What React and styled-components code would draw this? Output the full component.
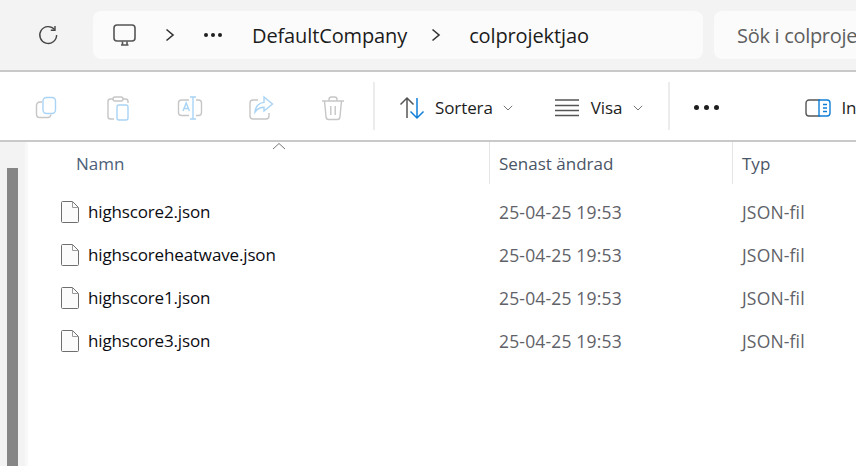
import React from 'react';
import styled, { createGlobalStyle } from 'styled-components';

const Global = createGlobalStyle`
html, body { margin: 0; padding: 0; background: #fff; }
body { width: 856px; height: 466px; overflow: hidden; font-family: 'Open Sans', 'Noto Sans', sans-serif; }
`;

const Window = styled.div`
width: 856px;
height: 466px;
display: flex;
flex-direction: column;
overflow: hidden;
`;

const AddressBar = styled.div`
height: 70px;
flex: none;
display: flex;
align-items: center;
background: #f3f3f3;
border-bottom: 2px solid #c9c9c9;
padding-left: 37px;
`;

const Refresh = styled.div`
width: 22px;
height: 22px;
margin-right: 34px;
flex: none;
`;

const Crumbs = styled.div`
width: 610px;
height: 48px;
flex: none;
display: flex;
align-items: center;
background: #fbfbfb;
border-radius: 8px;
padding-left: 20px;
box-sizing: border-box;
`;

const Crumb = styled.span`
font-size: 20px;
letter-spacing: -0.12px;
color: #1c1c1c;
margin-left: ${p => p.$left}px;
`;

const Chevron = styled.svg`
width: 10px;
height: 14px;
margin-left: ${p => p.$left}px;
flex: none;
`;

const Dots = styled.span`
display: flex;
gap: ${p => p.$gap}px;
margin-left: ${p => p.$left}px;
`;

const Dot = styled.i`
width: ${p => p.$size}px;
height: ${p => p.$size}px;
border-radius: 50%;
background: #1f1f1f;
`;

const Search = styled.div`
width: 200px;
height: 48px;
flex: none;
margin-left: 11px;
padding-left: 23px;
box-sizing: border-box;
display: flex;
align-items: center;
background: #fbfbfb;
border-radius: 8px;
font-size: 20px;
letter-spacing: -0.3px;
color: #5f5f5f;
white-space: nowrap;
overflow: hidden;
`;

const Toolbar = styled.div`
height: 65px;
padding: 3px 0 0 33px;
flex: none;
display: flex;
align-items: center;
background: #fff;
border-bottom: 2px solid #c9c9c9;
white-space: nowrap;
`;

const ToolIcon = styled.svg`
width: 26px;
height: 26px;
flex: none;
margin-right: ${p => p.$gap || 0}px;
margin-left: ${p => p.$left || 0}px;
`;

const Divider = styled.div`
width: 2px;
height: 48px;
flex: none;
background: #ececec;
margin: -3px ${p => p.$right}px 0 ${p => p.$left}px;
`;

const ToolLabel = styled.span`
font-size: 17px;
letter-spacing: -0.1px;
color: #1c1c1c;
margin-left: ${p => p.$left}px;
`;

const Caret = styled.svg`
width: 10px;
height: 6px;
flex: none;
margin-left: ${p => p.$left}px;
margin-right: ${p => p.$right}px;
`;

const Body = styled.div`
flex: 1;
display: flex;
min-height: 0;
`;

const Gutter = styled.div`
width: 18px;
flex: none;
padding: 26px 0 0 7px;
background: #f3f3f3;
border-right: 3px solid #f8f8f8;
`;

const ScrollThumb = styled.div`
width: 11px;
height: 100%;
background: #868686;
`;

const List = styled.div`
flex: 1;
min-width: 0;
`;

const Columns = styled.div`
display: grid;
grid-template-columns: 462px 243px 1fr;
`;

const HeadRow = styled(Columns)`
height: 42px;
position: relative;
`;

const SortArrow = styled.svg`
position: absolute;
left: 244px;
top: 0;
width: 14px;
height: 8px;
`;

const HeadCell = styled.div`
font-size: 17px;
color: ${p => (p.$first ? '#4c607a' : '#4a5566')};
display: flex;
align-items: center;
padding-left: ${p => p.$pad}px;
border-right: ${p => (p.$line ? '1px solid #e5e5e5' : 'none')};
`;

const Row = styled(Columns)`
height: 43px;
align-items: center;
&:first-of-type { margin-top: 6px; }
`;

const NameCell = styled.div`
display: flex;
align-items: center;
padding-left: 33px;
font-size: 17px;
letter-spacing: -0.15px;
color: #0b0b12;
`;

const FileIcon = styled.svg`
width: 18px;
height: 22px;
flex: none;
margin-right: 9px;
`;

const Cell = styled.div`
font-size: 17.5px;
letter-spacing: 0.17px;
color: #5f6268;
padding-left: ${p => p.$pad}px;
`;

const Rows = styled.div``;

const grey = '#c6c6c6';
const blue = '#a9d4f5';

const files = ['highscore2.json', 'highscoreheatwave.json', 'highscore1.json', 'highscore3.json'];

const App = () => (
    <Window>
        <Global />
        <AddressBar>
            <Refresh>
                <svg width="22" height="22" viewBox="0 0 22 22" fill="none" stroke="#444" strokeWidth="1.4">
                    <path d="M17.6 5.6A8.4 8.4 0 1 0 19.6 11" />
                    <path d="M18 2v4.2h-4.2" />
                </svg>
            </Refresh>
            <Crumbs>
                <svg width="24" height="23" viewBox="0 0 24 23" fill="none" stroke="#555" strokeWidth="1.6">
                    <rect x="1" y="1" width="21" height="16" rx="3" />
                    <path d="M8 21h7.5M9.5 17.5v3M14 17.500v3" />
                </svg>
                <Chevron $left={28} viewBox="0 0 10 14" fill="none" stroke="#333" strokeWidth="1.6">
                    <path d="M1.500 1.500L8 7l-6.500 5.500" />
                </Chevron>
                <Dots $left={29} $gap={3}><Dot $size={4} /><Dot $size={4} /><Dot $size={4} /></Dots>
                <Crumb $left={30}>DefaultCompany</Crumb>
                <Chevron $left={24} viewBox="0 0 10 14" fill="none" stroke="#333" strokeWidth="1.6">
                    <path d="M1.500 1.500L8 7l-6.500 5.500" />
                </Chevron>
                <Crumb $left={28}>colprojektjao</Crumb>
            </Crumbs>
            <Search>Sök i colprojektjao</Search>
        </AddressBar>
        <Toolbar>
            <ToolIcon $gap={46} viewBox="0 0 26 26" fill="none" strokeWidth="1.4">
                <path stroke={grey} d="M9 7H7a3.5 3.5 0 0 0-3.500 3.500v9A3 3 0 0 0 6.500 22.500h8a3.500 3.500 0 0 0 3.500-3" />
                <rect stroke={blue} x="10" y="2.500" width="12.500" height="16" rx="3.500" />
            </ToolIcon>
            <ToolIcon $gap={46} viewBox="0 0 26 26" fill="none" strokeWidth="1.4">
                <path stroke={grey} d="M8 4H5.500A2.500 2.500 0 0 0 3 6.500v15A2.500 2.500 0 0 0 5.500 24H9M18 4h2.500A2.500 2.500 0 0 1 23 6.500V8" />
                <rect stroke={grey} x="8" y="2" width="10" height="4" rx="2" />
                <rect stroke={blue} x="12" y="10" width="11" height="15" rx="2" />
            </ToolIcon>
            <ToolIcon $gap={45} viewBox="0 0 26 26" fill="none" strokeWidth="1.4">
                <path stroke={grey} d="M12 5H4.500A3 3 0 0 0 1.500 8v9.500a3 3 0 0 0 3 3H12M19 5h2.500a3 3 0 0 1 3 3v9.500a3 3 0 0 1-3 3H19" />
                <path stroke={blue} d="M6 16l3.200-8 3.200 8M7 13.500h4.500" />
                <path stroke={blue} d="M13 2h6M13 24h6M16 2v22" />
            </ToolIcon>
            <ToolIcon $gap={46} viewBox="0 0 26 26" fill="none" strokeWidth="1.4">
                <path stroke={grey} d="M10 5H5a3 3 0 0 0-3 3v13a3 3 0 0 0 3 3h13a3 3 0 0 0 3-3v-3" />
                <path stroke={blue} d="M16 2l8.500 7-8.500 7v-3.800c-4 0-6.500 1.300-9 4.800.6-5.500 3.500-9 9-9.600z" />
            </ToolIcon>
            <ToolIcon viewBox="0 0 26 26" fill="none" strokeWidth="1.4" stroke={grey}>
                <path d="M2 6h22M9 6V4.500A2.500 2.500 0 0 1 11.500 2h3A2.500 2.500 0 0 1 17 4.500V6" />
                <path d="M4.500 6l1.600 16.500a2.500 2.500 0 0 0 2.500 2h8.800a2.500 2.500 0 0 0 2.500-2L21.500 6" />
                <path d="M10.800 11v9M15.200 11v9" />
            </ToolIcon>
            <Divider $left={27} $right={24} />
            <ToolIcon viewBox="0 0 26 26" fill="none" strokeWidth="1.5">
                <path stroke="#555" d="M8 23V3M1.500 9.500L8 3l6.500 6.500" />
                <path stroke="#0f7fd8" d="M18 3v20M11.500 16.500L18 23l6.500-6.500" />
            </ToolIcon>
            <ToolLabel $left={10}>Sortera</ToolLabel>
            <Caret $left={10} $right={42} viewBox="0 0 10 6" fill="none" stroke="#777" strokeWidth="1">
                <path d="M.8.8L5 5 9.200.8" />
            </Caret>
            <ToolIcon viewBox="0 0 26 26" fill="none" stroke="#555" strokeWidth="1.300">
                <path d="M0 5h24M0 10.500h24M0 15.500h24M0 20.500h24" />
            </ToolIcon>
            <ToolLabel $left={10}>Visa</ToolLabel>
            <Caret $left={11} $right={25} viewBox="0 0 10 6" fill="none" stroke="#777" strokeWidth="1">
                <path d="M.8.8L5 5 9.200.8" />
            </Caret>
            <Divider $left={0} $right={24} />
            <Dots $left={0} $gap={5}><Dot $size={5} /><Dot $size={5} /><Dot $size={5} /></Dots>
            <ToolIcon $left={86} viewBox="0 0 26 26" fill="none" strokeWidth="1.4">
                <path stroke="#555" d="M15 5H4a3 3 0 0 0-3 3v10a3 3 0 0 0 3 3h11" />
                <path stroke="#0f7fd8" d="M14 5h8a3 3 0 0 1 3 3v10a3 3 0 0 1-3 3h-8zM18 9.500h4M18 13h4M18 16.500h4" />
            </ToolIcon>
            <ToolLabel $left={10}>Information</ToolLabel>
        </Toolbar>
        <Body>
            <Gutter><ScrollThumb /></Gutter>
            <List>
                <HeadRow>
                    <SortArrow viewBox="0 0 14 8" fill="none" stroke="#777" strokeWidth="1">
                        <path d="M1 7l6-5.500L13 7" />
                    </SortArrow>
                    <HeadCell $first $line $pad={48}>Namn</HeadCell>
                    <HeadCell $line $pad={9}>Senast ändrad</HeadCell>
                    <HeadCell $pad={9}>Typ</HeadCell>
                </HeadRow>
                <Rows>
                    {files.map(name => (
                        <Row key={name}>
                            <NameCell>
                                <FileIcon viewBox="0 0 18 22" fill="#fbfbfb" stroke="#6e6e6e" strokeWidth="1">
                                    <path d="M1.500.5h10l6 6v14a1 1 0 0 1-1 1h-15a1 1 0 0 1-1-1v-19a1 1 0 0 1 1-1z" />
                                    <path d="M11.500.5v6h6" fill="none" stroke="#9a9a9a" />
                                </FileIcon>
                                {name}
                            </NameCell>
                            <Cell $pad={9}>25-04-25 19:53</Cell>
                            <Cell $pad={9}>JSON-fil</Cell>
                        </Row>
                    ))}
                </Rows>
            </List>
        </Body>
    </Window>
);

export default App;
